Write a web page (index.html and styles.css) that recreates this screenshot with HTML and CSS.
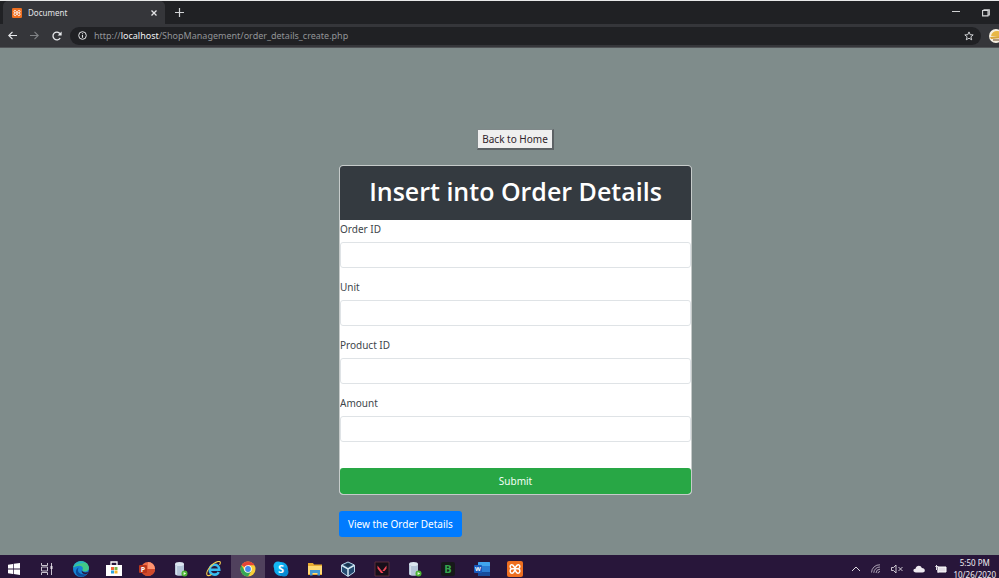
FILE: index.html
```html
<!DOCTYPE html>
<html lang="en">
<head>
<meta charset="utf-8">
<title>Document</title>
<link rel="stylesheet" href="styles.css">
</head>
<body>
<svg class="defs" aria-hidden="true">
  <symbol id="xampp" viewBox="0 0 16 16">
    <rect width="16" height="16" rx="2" fill="#ee6f20"/>
    <path d="M5 3.800C2.600 3.400 2.600 7.200 4.600 7.700 2.400 8.400 2.600 12.400 5.200 12.200 6.800 12 7 10.500 8 8.900 9 10.500 9.200 12 10.800 12.200 13.400 12.400 13.600 8.400 11.400 7.700 13.400 7.200 13.400 3.400 11 3.800 9.600 4 9.200 5.600 8 6.800 6.800 5.600 6.400 4 5 3.800ZM4.600 7.800H11.400" fill="none" stroke="#fff" stroke-width="1.500"/>
  </symbol>
  <symbol id="database" viewBox="0 0 16 16">
    <path d="M2 3v10c0 2.400 9 2.400 9 0V3" fill="#b4c5d8"/>
    <ellipse cx="6.500" cy="3" rx="4.500" ry="2" fill="#dbe6f0"/>
    <path d="M3.500 5v9" stroke="#d5e0ec" stroke-width="1.200"/>
    <circle cx="11.500" cy="12.500" r="3" fill="#4db534"/>
    <path d="M10.600 11l2.600 1.500-2.600 1.500Z" fill="#e9ffe0"/>
  </symbol>
</svg>
<header class="browser">
  <div class="tabs">
    <div class="tab">
      <svg class="favicon" aria-hidden="true"><use href="#xampp"/></svg>
      <span>Document</span>
      <button class="bare close" aria-label="Close tab"><svg width="6" height="6" viewBox="0 0 6 6"><path d="M.5.5l5 5M5.500.5l-5 5" stroke="#e4e5e7" stroke-width="1.300"/></svg></button>
    </div>
    <button class="bare new" aria-label="New tab"><svg width="9" height="9" viewBox="0 0 9 9"><path d="M4.500 0v9M0 4.500h9" stroke="#d2d4d6" stroke-width="1.200"/></svg></button>
    <div class="window">
      <button class="bare" aria-label="Minimize"><svg width="8" height="8" viewBox="0 0 8 8"><path d="M0 2.500h8" stroke="#cfd0d2"/></svg></button>
      <button class="bare" aria-label="Restore"><svg width="8" height="8" viewBox="0 0 8 8"><path d="M2 1.500V.7h5.300V6H6M.6 1.500h5.400v5.400H.6Z" fill="none" stroke="#d8d9da" stroke-width="1.100"/></svg></button>
    </div>
  </div>
  <div class="toolbar">
    <button class="bare" aria-label="Back"><svg width="9" height="9" viewBox="0 0 9 9"><path d="M9 4.500H1M4.500.8L.8 4.500l3.700 3.700" fill="none" stroke="#e8eaed" stroke-width="1.200"/></svg></button>
    <button class="bare" aria-label="Forward"><svg width="9" height="9" viewBox="0 0 9 9"><path d="M0 4.500h8M4.500.8l3.700 3.700-3.700 3.700" fill="none" stroke="#818386" stroke-width="1.100"/></svg></button>
    <button class="bare" aria-label="Reload"><svg width="10" height="10" viewBox="0 0 10 10"><path d="M8.200 7A3.900 3.900 0 1 1 8 2.600" fill="none" stroke="#e8eaed" stroke-width="1.300"/><path d="M9.600.6v4H5.600Z" fill="#e8eaed"/></svg></button>
    <div class="address">
      <svg width="9" height="9" viewBox="0 0 9 9" aria-hidden="true"><circle cx="4.500" cy="4.500" r="3.800" fill="none" stroke="#e1e3e5"/><path d="M4.500 4v2.700M4.500 2.200v1" stroke="#e1e3e5" stroke-width="1.100"/></svg>
      <span class="url">http://<b>localhost</b>/ShopManagement/order_details_create.php</span>
      <button class="bare" aria-label="Bookmark"><svg width="10" height="10" viewBox="0 0 10 10"><path d="M5 .9l1.200 2.800 3 .2-2.300 1.900.8 3L5 7.200 2.300 8.800l.8-3L.8 3.900l3-.2Z" fill="none" stroke="#dfe1e3" stroke-width=".9"/></svg></button>
    </div>
    <svg class="avatar" width="14" height="14" viewBox="0 0 14 14" aria-hidden="true"><circle cx="7" cy="7" r="7" fill="#f5efe1"/><path d="M2 7c1-6 9-7 12-1v2Z" fill="#e8b746"/><path d="M1 8l13-1v2L2 10Z" fill="#d9a43a"/><path d="M4 10h7v2H4Z" fill="#b09a80"/></svg>
  </div>
</header>
<main class="page">
  <div class="content">
    <button class="home">Back to Home</button>
    <form class="card">
      <h1>Insert into Order Details</h1>
      <div class="field"><label for="order">Order ID</label><input id="order" type="text"></div>
      <div class="field"><label for="unit">Unit</label><input id="unit" type="text"></div>
      <div class="field"><label for="product">Product ID</label><input id="product" type="text"></div>
      <div class="field"><label for="amount">Amount</label><input id="amount" type="text"></div>
      <button class="submit" type="button">Submit</button>
    </form>
    <a class="view" href="#">View the Order Details</a>
  </div>
</main>
<footer class="taskbar">
  <div class="apps">
    <button class="bare" aria-label="Start"><svg class="app" viewBox="0 0 16 16"><path d="M2 3.700l5-.8v4.700H2ZM7.700 2.800L14 2v5.600H7.700ZM2 8.400h5v4.700l-5-.8ZM7.700 8.400H14V14l-6.300-.9Z" fill="#fff"/></svg></button>
    <button class="bare" aria-label="Task view"><svg class="app" viewBox="0 0 16 16"><path d="M2.500 2v2.500h6V2M2.500 14v-2.500h6V14M2.500 6h6v4h-6ZM12.500 2v12" fill="none" stroke="#c9c3cf"/><path d="M11.500 5h2v3h-2Z" fill="#e5e0e8"/></svg></button>
    <button class="bare" aria-label="Edge"><svg class="app" viewBox="0 0 16 16"><circle cx="8" cy="8" r="8" fill="#1684d5"/><path d="M.2 6.600C2-2 15-2 16 6.800c0 4.200-5.500 4.500-6.700 2.500C11 6 8.500 4.500 6 4.700 3.500 4.900 1 6 .2 6.600Z" fill="#42ca86"/><path d="M.2 6.500C2 0 9-.8 12.200 2 8 2 3 3 .2 6.500Z" fill="#28b3c3"/><path d="M5.800 6.500C3 10 7 15 14 12.800c-5 5.500-12 2-11-3 .3-1.500 1.300-2.800 2.800-3.300Z" fill="#0c4c9a"/><path d="M8.800 9.300c.7 2.400 4.700 2.800 6.600 1.200L14 12.800c-3.400.8-6-.6-5.200-3.500Z" fill="#2a153a"/></svg></button>
    <button class="bare" aria-label="Store"><svg class="app" viewBox="0 0 16 16"><path d="M5 4V1h6v3" fill="none" stroke="#fff" stroke-width="1.300"/><path d="M0 4h16v11H0Z" fill="#fff"/><path d="M5 6h3v3H5Z" fill="#ee6538"/><path d="M8.500 6h3v3h-3Z" fill="#7ab648"/><path d="M5 9.500h3v3H5Z" fill="#2ca4df"/><path d="M8.500 9.500h3v3h-3Z" fill="#f4b72b"/></svg></button>
    <button class="bare" aria-label="PowerPoint"><svg class="app" viewBox="0 0 16 16"><circle cx="9" cy="8" r="7" fill="#ed6c47"/><path d="M9 1a7 7 0 0 1 7 7H9Z" fill="#ff9471"/><path d="M2 8h14a7 7 0 0 1-14 0Z" fill="#d14a2b"/><rect y="4" width="8" height="8" rx="1" fill="#b9361c"/><text class="mark" x="4" y="10.500" font-size="7" text-anchor="middle">P</text></svg></button>
    <button class="bare" aria-label="Database"><svg class="app"><use href="#database"/></svg></button>
    <button class="bare" aria-label="Internet Explorer"><svg class="app" viewBox="0 0 16 16"><path d="M3.500 8.700h9.800C13 2 4 2.500 3.700 8.500c-.1 6 7.300 6.500 9 2.500" fill="none" stroke="#38bdf0" stroke-width="2.500"/><path d="M13.500 4C17-2 9 0 4 6-1 12 0 17 5.500 13.500" fill="none" stroke="#f4cf51" stroke-width="1.100"/></svg></button>
    <button class="bare active" aria-label="Chrome"><svg class="app" viewBox="0 0 16 16"><circle cx="8" cy="8" r="7.500" fill="#f9ce39"/><path d="M8 8L1.500 4.200a7.500 7.500 0 0 1 13 0H8Z" fill="#e54436"/><path d="M1.500 4.200A7.500 7.500 0 0 0 8 15.500l3.300-5.600L8 8 4.700 9.900Z" fill="#37a756"/><circle cx="8" cy="8" r="3.800" fill="#fff"/><circle cx="8" cy="8" r="2.900" fill="#4488ed"/></svg></button>
    <button class="bare" aria-label="Skype"><svg class="app" viewBox="0 0 16 16"><circle cx="8" cy="8" r="7" fill="#0ca9ed"/><circle cx="5" cy="5" r="4.500" fill="#13b7f3"/><circle cx="11" cy="11" r="4.500" fill="#078bd5"/><text class="mark" x="8" y="12" font-size="11" text-anchor="middle">S</text></svg></button>
    <button class="bare" aria-label="File Explorer"><svg class="app" viewBox="0 0 16 16"><path d="M1 2h5l1 1.500h8V14H1Z" fill="#e8ab31"/><path d="M1 5h14v8H1Z" fill="#ffda73"/><path d="M3 9h10v5.500h-2.500V12h-5v2.500H3Z" fill="#4199d2"/></svg></button>
    <button class="bare" aria-label="VirtualBox"><svg class="app" viewBox="0 0 16 16"><path d="M8 1l6.500 3v7L8 15.500 1.500 11V4Z" fill="#244b70" stroke="#b8d5e9"/><path d="M2 4.500l6 3.300 6-3.300M8 8v7" stroke="#d8ebf5" fill="none" stroke-width="1.500"/><path d="M4.500 3.800L8 5.800l3.500-2L8 2.200Z" fill="#19334c"/></svg></button>
    <button class="bare" aria-label="Valorant"><svg class="app" viewBox="0 0 16 16"><path d="M1 1h14v14H1Z" fill="#160f19" stroke="#67343d" stroke-width=".8"/><path d="M3.500 4.500v3L7 12h2.500ZM12.500 4.500v3l-2 2.500H8.300Z" fill="#ed4556"/></svg></button>
    <button class="bare" aria-label="Database tools"><svg class="app"><use href="#database"/></svg></button>
    <button class="bare" aria-label="Editor"><svg class="app" viewBox="0 0 16 16"><rect x="1" y="1" width="14" height="14" rx="2" fill="#17191a"/><text class="mark green" x="8" y="12" font-size="11" text-anchor="middle">B</text></svg></button>
    <button class="bare" aria-label="Word"><svg class="app" viewBox="0 0 16 16"><rect x="4" y="1" width="12" height="14" rx="1" fill="#2b7cd3"/><path d="M4 2q0-1 1-1h10q1 0 1 1v3H4Z" fill="#41a5ee"/><path d="M4 11h12v3q0 1-1 1H5q-1 0-1-1Z" fill="#174b9b"/><rect y="4" width="8" height="8" rx="1" fill="#185abd"/><text class="mark" x="4" y="10" font-size="6" text-anchor="middle">W</text></svg></button>
    <button class="bare" aria-label="XAMPP"><svg class="app"><use href="#xampp"/></svg></button>
  </div>
  <div class="tray">
    <svg width="10" height="10" viewBox="0 0 10 10"><path d="M1 7l4-4 4 4" fill="none" stroke="#ddd8e0"/></svg>
    <svg width="10" height="10" viewBox="0 0 10 10"><path d="M.5 8.500A8 8 0 0 1 9 .8M2.800 8.800A6 6 0 0 1 9 3M5 9a4 4 0 0 1 4-3.800M7 9.200a2 2 0 0 1 2-1.700" fill="none" stroke="#bdb4c3" stroke-width=".9"/></svg>
    <svg width="12" height="10" viewBox="0 0 12 10"><path d="M.5 3.500h2L5 1v8L2.500 6.500h-2ZM7.500 3l4 4M11.500 3l-4 4" fill="none" stroke="#ddd8e0" stroke-width=".9"/></svg>
    <svg width="12" height="10" viewBox="0 0 12 10"><path d="M3 8.500C-.5 8.500-.2 4.500 2.500 4.800 3 1 8 .8 8.800 4c3.800 0 4 4.500.7 4.500Z" fill="#eeeaf0"/></svg>
    <svg width="12" height="10" viewBox="0 0 12 10"><path d="M3 3h8v5H3Z" fill="#e2dde5" stroke="#fff"/><path d="M1.500 1v5M.3 2.500h3M3 6v3" stroke="#e5e1e8"/></svg>
    <div class="clock"><time>5:50 PM</time><time>10/26/2020</time></div>
  </div>
</footer>
</body>
</html>
```
FILE: styles.css
```css
* { box-sizing: border-box; }
body {
  margin: 0;
  height: 100vh;
  display: flex;
  flex-direction: column;
  overflow: hidden;
  background: #7f8c8b;
  color: #40464b;
  font: 10px/16px "Noto Sans", "Open Sans", sans-serif;
}
button, input { font: inherit; }
svg { display: block; flex: none; }
.defs { position: absolute; width: 0; height: 0; }
.bare {
  display: flex;
  align-items: center;
  justify-content: center;
  padding: 0;
  border: 0;
  background: none;
}
.browser { flex: none; background: #202124; border-top: 1px solid #e8e9e9; }
.tabs { display: flex; align-items: center; height: 23px; }
.tab {
  display: flex;
  align-items: center;
  gap: 6px;
  align-self: stretch;
  width: 162px;
  margin-left: 3px;
  padding: 0 8px 0 9px;
  border-radius: 5px 5px 0 0;
  background: #35363a;
  color: #e3e4e6;
  font-size: 8px;
}
.favicon { width: 10px; height: 10px; }
.close { margin-left: auto; }
.new { margin-left: 10px; }
.window { display: flex; gap: 22px; margin-left: auto; padding-right: 9px; }
.toolbar {
  display: flex;
  align-items: center;
  gap: 13px;
  height: 24px;
  padding-left: 8px;
  background: #35363a;
  border-bottom: 1px solid #505356;
  overflow: hidden;
}
.address {
  flex: 1;
  display: flex;
  align-items: center;
  gap: 7px;
  height: 18px;
  margin: 0 -5px;
  padding: 0 7px 0 8px;
  border-radius: 9px;
  background: #202124;
}
.url { flex: 1; color: #929497; font-size: 9px; }
.url b { color: #f1f2f3; font-weight: 400; }
.avatar { margin-right: -4px; }
.page { flex: 1; min-height: 0; padding: 81px 0 0 32px; }
.content { width: 353px; margin: 0 auto; }
.home {
  display: block;
  margin: 0 auto 15px;
  padding: 0 4px;
  border: solid;
  border-width: 1px 2px 2px 1px;
  border-color: #80898a #5c6265 #5c6265 #80898a;
  background: #efefef;
  color: #30242b;
  line-height: 18px;
}
.card {
  border: 1px solid #c6cbca;
  border-radius: 4px;
  background: #fff;
  overflow: hidden;
}
h1 {
  margin: 0;
  padding: 8px 0 12px;
  background: #343a40;
  color: #fff;
  text-align: center;
  font-family: "Open Sans", sans-serif;
  font-size: 25px;
  font-weight: 600;
  line-height: 34px;
}
.field { margin-bottom: 10px; }
.field label { display: block; line-height: 18px; margin-bottom: 4px; }
.field input {
  display: block;
  width: 100%;
  height: 26px;
  padding: 4px 8px;
  border: 1px solid #dfe3e6;
  border-radius: 3px;
  background: #fff;
}
.submit {
  display: block;
  width: 100%;
  margin-top: 26px;
  padding: 4px;
  border: 0;
  border-radius: 3px;
  background: #28a745;
  color: #f4fff6;
  line-height: 18px;
}
.view {
  display: inline-block;
  margin-top: 16px;
  padding: 4px 9px;
  border-radius: 3px;
  background: #007bff;
  color: #fff;
  line-height: 18px;
  text-decoration: none;
}
.taskbar {
  flex: none;
  display: flex;
  justify-content: space-between;
  height: 23px;
  background: #28163a;
  overflow: hidden;
}
.apps {
  display: grid;
  grid-template-columns: repeat(16, 1fr);
  width: 535px;
  margin-left: -3px;
  height: 27px;
}
.app { width: 16px; height: 16px; }
.active { background: #50415d; }
.mark { fill: #fff; font-family: "Open Sans", sans-serif; font-weight: 700; }
.green { fill: #36a64f; }
.tray { display: flex; align-items: center; gap: 10px; height: 27px; padding-right: 3px; }
.clock { display: flex; flex-direction: column; margin-left: -4px; color: #f0edf2; text-align: center; font-size: 8px; line-height: 12px; }
```
